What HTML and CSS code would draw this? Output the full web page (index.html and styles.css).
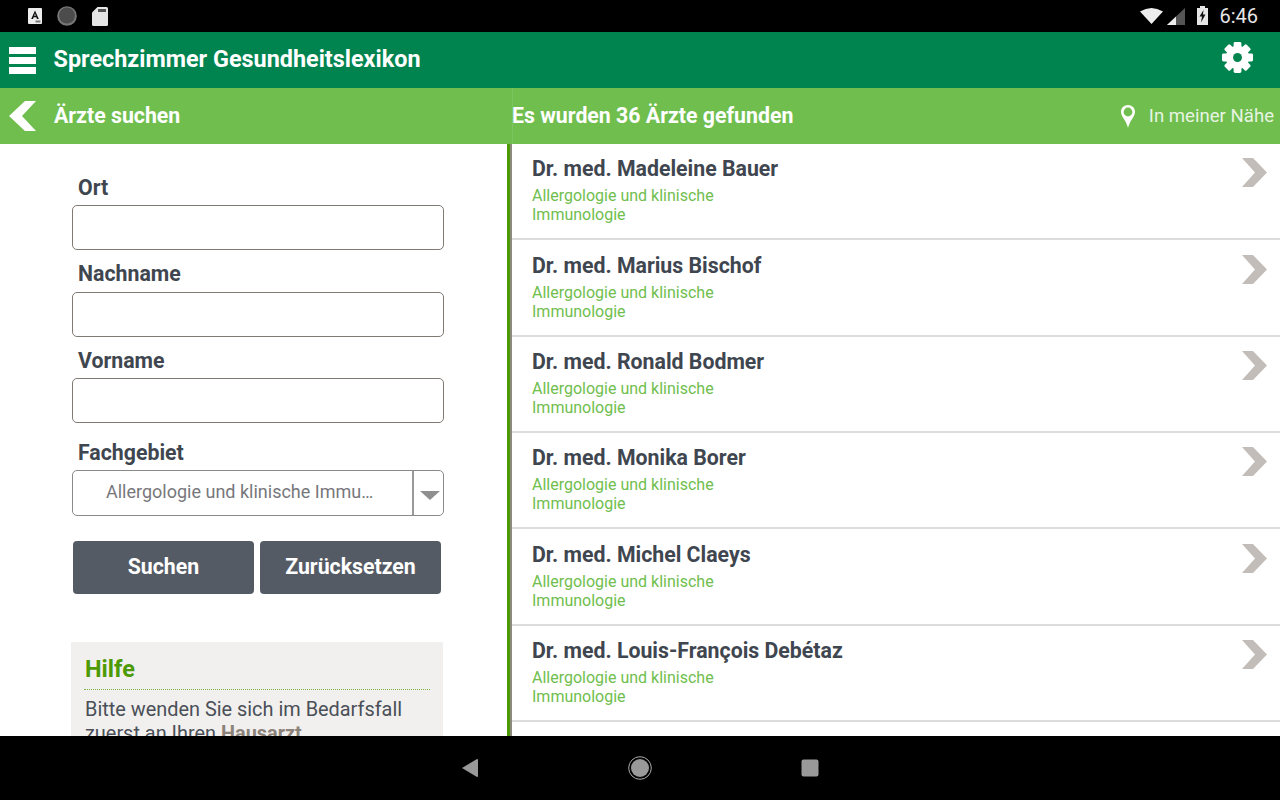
FILE: index.html
```html
<!DOCTYPE html>
<html lang="de">
<head>
    <meta charset="UTF-8">
    <meta name="viewport" content="width=device-width, initial-scale=1.0">
    <title>Sprechzimmer Gesundheitslexikon</title>
    <link rel="stylesheet" href="styles.css">
</head>
<body>
    <div class="screen">
        <!-- Android status bar -->
        <div class="status-bar">
            <div class="status-left">
                <svg width="14" height="16" viewBox="0 0 14 16"><rect width="14" height="16" rx="1" fill="#eee"/><path d="M7 2.500 L3.200 11 H5 L5.700 9.200 H8.300 L9 11 H10.800 Z M6.200 7.800 L7 5.500 L7.800 7.800 Z" fill="#111"/><rect x="7.500" y="12.500" width="5" height="2" fill="#777"/></svg>
                <svg width="20" height="20" viewBox="0 0 20 20"><circle cx="10" cy="10" r="9.800" fill="#777"/><circle cx="10" cy="9.500" r="8" fill="#4c4c4c"/></svg>
                <svg width="16" height="19" viewBox="0 0 16 19"><path d="M5.500 0 H14.500 Q16 0 16 1.500 V17.500 Q16 19 14.500 19 H1.500 Q0 19 0 17.500 V5.500 Z" fill="#e6e6e6"/><rect x="6" y="2" width="8" height="3" fill="#555"/></svg>
            </div>
            <div class="status-right">
                <svg class="wifi" width="23" height="16" viewBox="0 0 23 16"><path d="M0 3.500 Q11.500 -3.500 23 3.500 L11.500 16 Z" fill="#eee"/></svg>
                <svg class="signal" width="18" height="17" viewBox="0 0 18 17"><path d="M0 17 L18 0 V17 Z" fill="#555"/><path d="M0 17 L9 8.500 V17 Z" fill="#eee"/></svg>
                <svg class="battery" width="11" height="19" viewBox="0 0 11 19"><path d="M3 2 V0 H8 V2 H11 V19 H0 V2 Z" fill="#e6e6e6"/><path d="M6.500 4 L2.500 10.500 H5 L4 16.500 L8.500 8.500 H6 Z" fill="#111"/></svg>
                <span class="clock">6:46</span>
            </div>
        </div>

        <header class="app-bar">
            <div class="hamburger"><span></span><span></span><span></span></div>
            <h1 class="app-title">Sprechzimmer Gesundheitslexikon</h1>
            <svg class="gear" width="33" height="33" viewBox="0 0 34 34">
                <g fill="#fff">
                    <circle cx="17" cy="17" r="12"/>
                    <rect x="13" y="1" width="8" height="32" rx="1.500"/>
                    <rect x="13" y="1" width="8" height="32" rx="1.500" transform="rotate(45 17 17)"/>
                    <rect x="13" y="1" width="8" height="32" rx="1.500" transform="rotate(90 17 17)"/>
                    <rect x="13" y="1" width="8" height="32" rx="1.500" transform="rotate(135 17 17)"/>
                </g>
                <circle cx="17" cy="17" r="4.600" fill="#00844f"/>
            </svg>
        </header>

        <div class="sub-bar">
            <div class="sub-left">
                <svg class="back" width="27" height="30" viewBox="0 0 27 30"><path d="M16 0 H27 L13 15 L27 30 H16 L0 15 Z" fill="#fff"/></svg>
                <span class="sub-title">Ärzte suchen</span>
            </div>
            <div class="sub-right">
                <span class="sub-title">Es wurden 36 Ärzte gefunden</span>
                <div class="nearby">
                    <svg width="14" height="23" viewBox="0 0 14 23"><path fill-rule="evenodd" d="M7 0 C2.900 0 0 3.100 0 7 C0 11.500 5 15 7 23 C9 15 14 11.500 14 7 C14 3.100 11.100 0 7 0 Z M7 2.600 A4.400 4.400 0 1 1 7 11.400 A4.400 4.400 0 1 1 7 2.600 Z" fill="#fff"/></svg>
                    <span>In meiner Nähe</span>
                </div>
            </div>
        </div>

        <main class="content">
            <section class="search-pane">
                <form class="search-form">
                    <label class="field-label">Ort</label>
                    <div class="text-input"></div>
                    <label class="field-label">Nachname</label>
                    <div class="text-input"></div>
                    <label class="field-label">Vorname</label>
                    <div class="text-input"></div>
                    <label class="field-label field-label-select">Fachgebiet</label>
                    <div class="select-input">
                        <span class="select-value">Allergologie und klinische Immu…</span>
                        <span class="select-arrow"></span>
                    </div>
                    <div class="buttons">
                        <button type="button" class="btn">Suchen</button>
                        <button type="button" class="btn">Zurücksetzen</button>
                    </div>
                </form>
                <div class="help-box">
                    <h2>Hilfe</h2>
                    <p>Bitte wenden Sie sich im Bedarfsfall zuerst an Ihren <strong>Hausarzt</strong></p>
                </div>
            </section>

            <section class="result-list">
                <div class="doctor">
                    <div>
                        <h3>Dr. med. Madeleine Bauer</h3>
                        <p>Allergologie und klinische<br>Immunologie</p>
                    </div>
                    <svg class="chevron" width="25" height="29" viewBox="0 0 25 29"><path d="M0 0 H11 L25 14.500 L11 29 H0 L13 14.500 Z" fill="#c2bdb8"/></svg>
                </div>
                <div class="doctor">
                    <div>
                        <h3>Dr. med. Marius Bischof</h3>
                        <p>Allergologie und klinische<br>Immunologie</p>
                    </div>
                    <svg class="chevron" width="25" height="29" viewBox="0 0 25 29"><path d="M0 0 H11 L25 14.500 L11 29 H0 L13 14.500 Z" fill="#c2bdb8"/></svg>
                </div>
                <div class="doctor">
                    <div>
                        <h3>Dr. med. Ronald Bodmer</h3>
                        <p>Allergologie und klinische<br>Immunologie</p>
                    </div>
                    <svg class="chevron" width="25" height="29" viewBox="0 0 25 29"><path d="M0 0 H11 L25 14.500 L11 29 H0 L13 14.500 Z" fill="#c2bdb8"/></svg>
                </div>
                <div class="doctor">
                    <div>
                        <h3>Dr. med. Monika Borer</h3>
                        <p>Allergologie und klinische<br>Immunologie</p>
                    </div>
                    <svg class="chevron" width="25" height="29" viewBox="0 0 25 29"><path d="M0 0 H11 L25 14.500 L11 29 H0 L13 14.500 Z" fill="#c2bdb8"/></svg>
                </div>
                <div class="doctor">
                    <div>
                        <h3>Dr. med. Michel Claeys</h3>
                        <p>Allergologie und klinische<br>Immunologie</p>
                    </div>
                    <svg class="chevron" width="25" height="29" viewBox="0 0 25 29"><path d="M0 0 H11 L25 14.500 L11 29 H0 L13 14.500 Z" fill="#c2bdb8"/></svg>
                </div>
                <div class="doctor">
                    <div>
                        <h3>Dr. med. Louis-François Debétaz</h3>
                        <p>Allergologie und klinische<br>Immunologie</p>
                    </div>
                    <svg class="chevron" width="25" height="29" viewBox="0 0 25 29"><path d="M0 0 H11 L25 14.500 L11 29 H0 L13 14.500 Z" fill="#c2bdb8"/></svg>
                </div>
            </section>
        </main>

        <!-- Android nav bar -->
        <div class="nav-bar">
            <svg width="18" height="20" viewBox="0 0 18 20"><path d="M1 10 L16 1 Q17 1 17 2 V18 Q17 19 16 19 Z" fill="#999"/></svg>
            <svg width="24" height="24" viewBox="0 0 24 24"><circle cx="12" cy="12" r="11.300" fill="none" stroke="#aaa" stroke-width="1"/><circle cx="12" cy="12" r="9" fill="#999"/></svg>
            <svg width="18" height="18" viewBox="0 0 18 18"><rect x="0.500" y="0.500" width="17" height="17" rx="2" fill="#999"/></svg>
        </div>
    </div>
</body>
</html>
```

FILE: styles.css
```css
* {
    box-sizing: border-box;
}

html, body {
    margin: 0;
    padding: 0;
}

body {
    font-family: Roboto, "Liberation Sans", sans-serif;
    background: #fff;
    overflow: hidden;
}

.screen {
    width: 1280px;
    height: 800px;
    display: flex;
    flex-direction: column;
    overflow: hidden;
}

/* Status bar */
.status-bar {
    height: 32px;
    background: #000;
    display: flex;
    justify-content: space-between;
    align-items: center;
    padding: 0 22px 0 28px;
    flex-shrink: 0;
}

.status-left,
.status-right {
    display: flex;
    align-items: center;
}

.status-left {
    gap: 15px;
}

.wifi {
    margin-right: 4px;
}

.signal {
    margin-right: 12px;
}

.battery {
    margin: -2px 11px 0 0;
}

.clock {
    color: #e6e6e6;
    font-size: 20px;
}

/* App bar */
.app-bar {
    height: 56px;
    background: #00844f;
    display: flex;
    align-items: center;
    padding: 0 26px 0 9px;
    flex-shrink: 0;
}

.hamburger {
    width: 27px;
    display: flex;
    flex-direction: column;
    gap: 3px;
}

.hamburger span {
    height: 7px;
    background: #fff;
}

.app-title {
    flex: 1;
    margin: -2px 0 0 17.5px;
    color: #fff;
    font-size: 23.4px;
    font-weight: 700;
}

.gear {
    margin-top: -6px;
}

/* Sub bar */
.sub-bar {
    height: 56px;
    background: #6fbe4e;
    display: flex;
    flex-shrink: 0;
}

.sub-left {
    width: 512px;
    display: flex;
    align-items: center;
    gap: 18px;
    padding-left: 9px;
}

.sub-right {
    flex: 1;
    display: flex;
    align-items: center;
    justify-content: space-between;
    padding-right: 6px;
    box-shadow: inset 1px 0 0 #7dc55f;
}

.sub-title {
    color: #fff;
    font-size: 21.3px;
    font-weight: 700;
    margin-top: -2px;
}

.nearby {
    display: flex;
    align-items: center;
    gap: 14px;
    color: #e8f4e2;
    font-size: 18.6px;
}

/* Content */
.content {
    flex: 1;
    display: flex;
    min-height: 0;
    overflow: hidden;
}

.search-pane {
    width: 512px;
    flex-shrink: 0;
    border-right: 2px solid #8c8a7e;
    box-shadow: inset -3px 0 0 #4d9a06;
    padding: 27.8px 0 0 71px;
    overflow: hidden;
}

.search-form {
    width: 373px;
}

.field-label {
    display: block;
    margin: 0 0 1.2px 7px;
    color: #40464f;
    font-size: 21.3px;
    font-weight: 700;
    line-height: 32px;
}

.field-label-select {
    margin-top: 14px;
}

.text-input {
    width: 372px;
    height: 45px;
    margin: 0 0 8.4px 1px;
    border: 1px solid #7f7a72;
    border-radius: 5px;
    background: #fff;
}

.select-input {
    width: 372px;
    height: 46px;
    margin-left: 1px;
    display: flex;
    border: 1px solid #8a8a8a;
    border-radius: 5px;
}

.select-value {
    width: 341px;
    border-right: 2px solid #999;
    padding-left: 33px;
    color: #77777b;
    font-size: 18px;
    line-height: 42px;
    white-space: nowrap;
}

.select-arrow {
    width: 0;
    height: 0;
    margin: 20px 0 0 6px;
    border-left: 10px solid transparent;
    border-right: 10px solid transparent;
    border-top: 9px solid #8f8f8f;
}

.buttons {
    display: flex;
    gap: 6px;
    margin: 25px 0 0 2px;
}

.btn {
    width: 181px;
    height: 53px;
    padding: 0 0 2px;
    border: none;
    border-radius: 4px;
    background: #555b65;
    color: #fff;
    font-family: inherit;
    font-size: 21.3px;
    font-weight: 700;
}

.help-box {
    width: 372px;
    height: 140px;
    margin-top: 48px;
    padding: 12px 13px 0 13px;
    background: #f1f0ee;
}

.help-box h2 {
    margin: 0;
    padding: 0 0 5px 1px;
    border-bottom: 1px dotted #7ab648;
    color: #4d9a06;
    font-size: 23.5px;
    font-weight: 700;
    line-height: 30px;
}

.help-box p {
    margin: 7.5px 0 0 1px;
    color: #4a4f58;
    font-size: 19.9px;
    line-height: 24px;
}

.help-box strong {
    color: #8c8279;
    font-weight: 700;
}

/* Doctor list */
.result-list {
    flex: 1;
    overflow: hidden;
}

.doctor {
    height: 96.35px;
    padding: 11.3px 13px 0 20px;
    display: flex;
    justify-content: space-between;
    align-items: flex-start;
    border-bottom: 2px solid #dcdcdc;
}

.doctor h3 {
    margin: 0;
    color: #40464f;
    font-size: 21.3px;
    font-weight: 700;
    line-height: 28px;
}

.doctor p {
    margin: 3px 0 0;
    color: #6fbe4e;
    font-size: 16px;
    line-height: 19px;
}

.chevron {
    margin-top: 3px;
}

/* Nav bar */
.nav-bar {
    height: 64px;
    background: #000;
    flex-shrink: 0;
    display: flex;
    align-items: center;
    justify-content: center;
    gap: 149px;
}
```
